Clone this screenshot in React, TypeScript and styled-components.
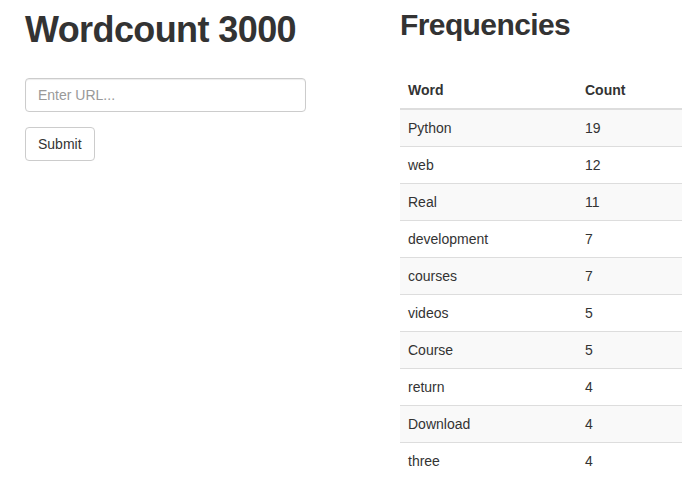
import React from 'react';
import styled, { createGlobalStyle } from 'styled-components';

const GlobalStyle = createGlobalStyle`
  html, body {
    margin: 0;
    padding: 0;
    background: #fff;
  }
  body {
    font-family: 'Liberation Sans', Arial, Helvetica, sans-serif;
    font-size: 14px;
    line-height: 20px;
    color: #333;
  }
  * {
    box-sizing: border-box;
  }
`;

const Page = styled.div`
  display: grid;
  grid-template-columns: 281px 282px;
  column-gap: 94px;
  padding: 0 25px;
`;

const Column = styled.div`
  display: flex;
  flex-direction: column;
  align-items: flex-start;
`;

const Title = styled.h1`
  margin: 10px 0 28px;
  font-size: 36px;
  line-height: 40px;
  font-weight: bold;
  letter-spacing: -0.6px;
  color: #333;
`;

const SubTitle = styled.h2`
  margin: 8px 0 31px;
  font-size: 30px;
  line-height: 33px;
  font-weight: bold;
  letter-spacing: -0.6px;
  color: #333;
`;

const Form = styled.form`
  display: flex;
  flex-direction: column;
  align-items: flex-start;
  gap: 15px;
  width: 100%;
`;

const Input = styled.input`
  width: 100%;
  height: 34px;
  padding: 6px 12px;
  font-family: inherit;
  font-size: 14px;
  line-height: 20px;
  color: #555;
  background: #fff;
  border: 1px solid #ccc;
  border-radius: 4px;
  box-shadow: inset 0 1px 1px rgba(0, 0, 0, 0.075);
  outline: none;

  &::placeholder {
    color: #999;
  }
`;

const Button = styled.button`
  height: 34px;
  padding: 6px 12px;
  font-family: inherit;
  font-size: 14px;
  line-height: 20px;
  color: #333;
  background: #fff;
  border: 1px solid #ccc;
  border-radius: 4px;
  cursor: pointer;
`;

const Table = styled.table`
  width: 100%;
  border-collapse: separate;
  border-spacing: 0;
  margin-bottom: 20px;
`;

const HeadCell = styled.th<{ $width?: number }>`
  padding: 8px;
  text-align: left;
  font-weight: bold;
  line-height: 20px;
  border-bottom: 2px solid #ddd;
  width: ${(p) => (p.$width ? `${p.$width}px` : 'auto')};
`;

const Row = styled.tr<{ $striped: boolean; $first: boolean }>`
  background: ${(p) => (p.$striped ? '#f9f9f9' : 'transparent')};

  td {
    border-top: ${(p) => (p.$first ? 'none' : '1px solid #ddd')};
  }
`;

const Cell = styled.td`
  padding: 8px;
  line-height: 20px;
  vertical-align: top;
`;

const frequencies: [string, number][] = [
  ['Python', 19],
  ['web', 12],
  ['Real', 11],
  ['development', 7],
  ['courses', 7],
  ['videos', 5],
  ['Course', 5],
  ['return', 4],
  ['Download', 4],
  ['three', 4],
];

const App: React.FC = () => {
  return (
    <>
      <GlobalStyle />
      <Page>
        <Column>
          <Title>Wordcount 3000</Title>
          <Form onSubmit={(e) => e.preventDefault()}>
            <Input type="text" placeholder="Enter URL..." />
            <Button type="submit">Submit</Button>
          </Form>
        </Column>
        <Column>
          <SubTitle>Frequencies</SubTitle>
          <Table>
            <thead>
              <tr>
                <HeadCell $width={177}>Word</HeadCell>
                <HeadCell>Count</HeadCell>
              </tr>
            </thead>
            <tbody>
              {frequencies.map(([word, count], i) => (
                <Row key={word} $striped={i % 2 === 0} $first={i === 0}>
                  <Cell>{word}</Cell>
                  <Cell>{count}</Cell>
                </Row>
              ))}
            </tbody>
          </Table>
        </Column>
      </Page>
    </>
  );
};

export default App;
